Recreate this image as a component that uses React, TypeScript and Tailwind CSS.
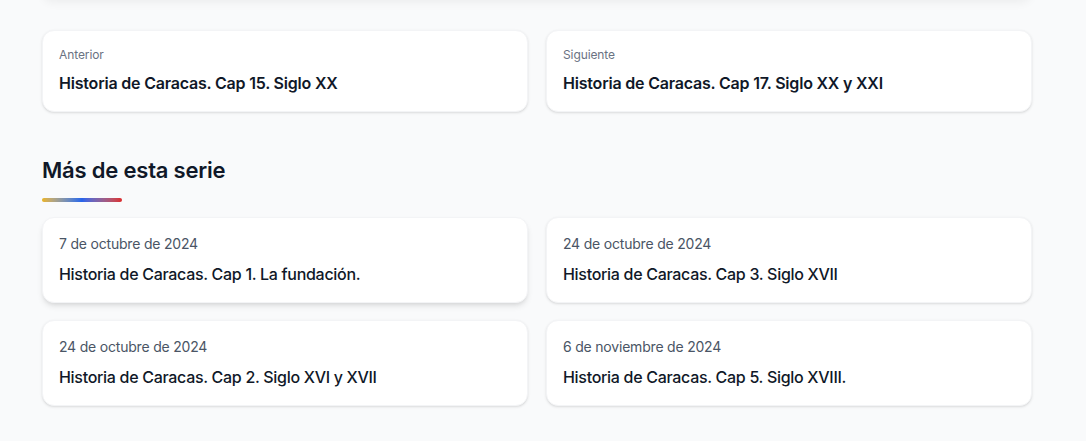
const NAV = [
    { label: 'Anterior', title: 'Historia de Caracas. Cap 15. Siglo XX' },
    { label: 'Siguiente', title: 'Historia de Caracas. Cap 17. Siglo XX y XXI' },
];

const SERIES = [
    { date: '7 de octubre de 2024', title: 'Historia de Caracas. Cap 1. La fundación.', hover: true },
    { date: '24 de octubre de 2024', title: 'Historia de Caracas. Cap 3. Siglo XVII' },
    { date: '24 de octubre de 2024', title: 'Historia de Caracas. Cap 2. Siglo XVI y XVII' },
    { date: '6 de noviembre de 2024', title: 'Historia de Caracas. Cap 5. Siglo XVIII.' },
];

export default function App() {
    return (
        <div className="min-h-screen overflow-hidden bg-gray-50 font-['Inter','Liberation_Sans',sans-serif] antialiased">
            <div className="ml-[42px] w-[990px]">
                {/* bottom edge of the article card above */}
                <div className="-mt-[80px] h-[80px] rounded-xl bg-white shadow-[0_3px_10px_rgba(0,0,0,0.05)]" />

                <div className="mt-[30px] grid grid-cols-2 gap-[18px]">
                    {NAV.map(n => (
                        <a
                            key={n.label}
                            href="#"
                            className="block rounded-xl border border-gray-100 bg-white px-4 py-4 shadow-sm"
                        >
                            <p className="text-xs tracking-[-0.1px] text-gray-500">{n.label}</p>
                            <p className="mt-2 text-base font-semibold tracking-[-0.2px] text-gray-900">{n.title}</p>
                        </a>
                    ))}
                </div>

                <h2 className="mt-[44px] text-[22px] leading-7 font-semibold tracking-[-0.2px] text-gray-900">Más de esta serie</h2>
                <div className="mt-3.5 h-1 w-20 rounded-full bg-linear-to-r from-[#eab308] via-[#2563eb] to-[#dc2626]" />

                <div className="mt-[15px] grid grid-cols-2 gap-x-[18px] gap-y-[17px]">
                    {SERIES.map(s => (
                        <a
                            key={s.title}
                            href="#"
                            className={`block rounded-xl border border-gray-100 bg-white px-4 py-4 ${s.hover ? 'shadow-md' : 'shadow-sm'}`}
                        >
                            <p className="text-sm tracking-[-0.2px] text-gray-600">{s.date}</p>
                            <p className="mt-2 text-base font-medium tracking-[-0.3px] text-gray-900">{s.title}</p>
                        </a>
                    ))}
                </div>
            </div>
        </div>
    );
}
